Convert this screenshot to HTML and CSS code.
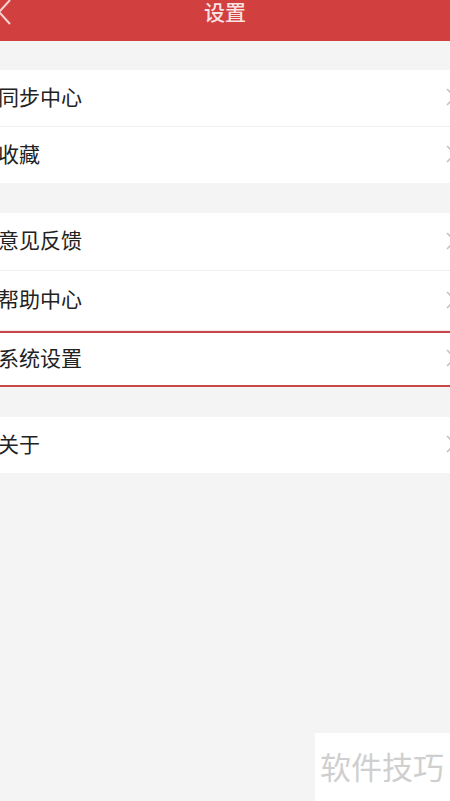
FILE: index.html
```html
<!DOCTYPE html>
<html lang="zh-CN">
<head>
<meta charset="utf-8">
<title>设置</title>
<link rel="stylesheet" href="styles.css">
</head>
<body>
<div class="page">
  <header class="topbar">
    <svg class="back" width="12" height="26" viewBox="0 0 12 26"><polyline points="10,0 -1,12 10,24" fill="none" stroke="#f4d4d4" stroke-width="2"/></svg>
    <h1 class="title">设置</h1>
  </header>
  <main class="content">
    <section class="group">
      <div class="row"><span class="label">同步中心</span><svg class="chev" width="10" height="18" viewBox="0 0 10 18"><polyline points="1,1 9,9 1,17" fill="none" stroke="#c4c4c4" stroke-width="1.6"/></svg></div>
      <div class="divider"></div>
      <div class="row"><span class="label">收藏</span><svg class="chev" width="10" height="18" viewBox="0 0 10 18"><polyline points="1,1 9,9 1,17" fill="none" stroke="#c4c4c4" stroke-width="1.6"/></svg></div>
    </section>
    <section class="group">
      <div class="row row-57"><span class="label">意见反馈</span><svg class="chev" width="10" height="18" viewBox="0 0 10 18"><polyline points="1,1 9,9 1,17" fill="none" stroke="#c4c4c4" stroke-width="1.6"/></svg></div>
      <div class="divider"></div>
      <div class="row row-59"><span class="label">帮助中心</span><svg class="chev" width="10" height="18" viewBox="0 0 10 18"><polyline points="1,1 9,9 1,17" fill="none" stroke="#c4c4c4" stroke-width="1.6"/></svg></div>
      <div class="divider pink"></div>
      <div class="row selected"><span class="label">系统设置</span><svg class="chev" width="10" height="18" viewBox="0 0 10 18"><polyline points="1,1 9,9 1,17" fill="none" stroke="#c4c4c4" stroke-width="1.6"/></svg></div>
    </section>
    <section class="group">
      <div class="row"><span class="label">关于</span><svg class="chev" width="10" height="18" viewBox="0 0 10 18"><polyline points="1,1 9,9 1,17" fill="none" stroke="#c4c4c4" stroke-width="1.6"/></svg></div>
    </section>
  </main>
  <div class="watermark">软件技巧</div>
</div>
</body>
</html>
```
FILE: styles.css
```css
html, body {
  margin: 0;
  padding: 0;
}
body {
  background: #f4f4f4;
  font-family: "Noto Sans CJK SC", "Noto Sans", sans-serif;
  color: #222;
}
.page {
  position: relative;
  width: 450px;
  height: 801px;
  overflow: hidden;
  background: #f4f4f4;
}
.topbar {
  position: relative;
  height: 41px;
  background: #d23f3f;
  display: flex;
  align-items: flex-start;
  justify-content: center;
}
.back {
  position: absolute;
  left: 0;
  top: 0;
}
.title {
  margin: -2px 0 0;
  font-size: 21px;
  font-weight: 500;
  line-height: 26px;
  color: #f8e2e2;
}
.content {
  padding-top: 29px;
  display: flex;
  flex-direction: column;
  gap: 30px;
}
.group {
  background: #fff;
  display: flex;
  flex-direction: column;
}
.row {
  height: 56px;
  display: flex;
  align-items: center;
  justify-content: space-between;
  overflow: hidden;
  background: #fff;
}
.row-57 { height: 57px; }
.row-59 { height: 59px; }
.label {
  font-size: 21px;
  line-height: 32px;
  margin-left: -2px;
  margin-bottom: 5px;
  color: #222;
}
.chev {
  margin-right: -6px;
  margin-top: -2px;
}
.divider {
  height: 1px;
  background: #efefef;
}
.divider.pink {
  background: #f8ecea;
}
.selected {
  height: 52px;
  border-top: 2px solid #c8474a;
  border-bottom: 2px solid #c8474a;
}
.watermark {
  position: absolute;
  left: 315px;
  top: 733px;
  width: 135px;
  height: 68px;
  background: #fff;
  color: #cfcfcf;
  font-size: 31px;
  line-height: 66px;
  padding-left: 5px;
  box-sizing: border-box;
}
```
